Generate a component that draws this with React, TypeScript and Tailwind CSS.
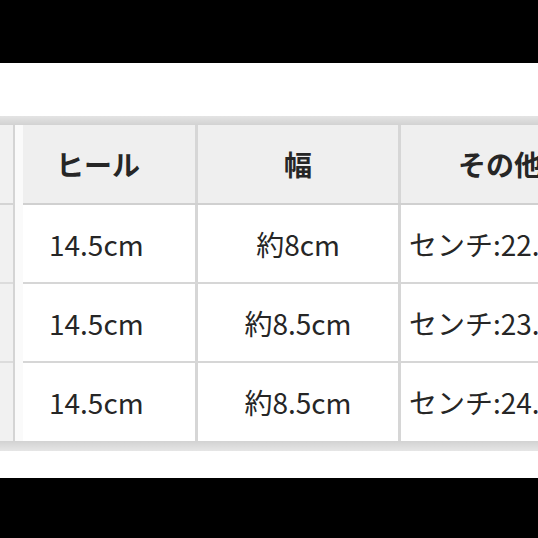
import React from 'react'

const rows = [
  { heel: '14.5cm', width: '約8cm', other: 'センチ:22.5cm' },
  { heel: '14.5cm', width: '約8.5cm', other: 'センチ:23.5cm' },
  { heel: '14.5cm', width: '約8.5cm', other: 'センチ:24.5cm' },
]

export default function App() {
  return (
    <div
      className="flex h-[538px] w-[538px] flex-col overflow-hidden bg-black text-[#262626]"
      style={{ fontFamily: '"Noto Sans CJK JP", "Noto Sans", sans-serif' }}
    >
      <div className="h-[63px] shrink-0 bg-black" />
      <div className="flex h-[415px] shrink-0 flex-col bg-white">
        <div className="h-[53px]" />
        <div className="h-[9px] bg-gradient-to-b from-[#e4e4e4] to-[#d2d2d2]" />

        <div className="flex">
          {/* cut-off first column */}
          <div className="flex w-[15px] shrink-0 flex-col border-r-2 border-[#d4d4d4] bg-[#f1f1f1]">
            <div className="h-[80px] border-b-2 border-[#d4d4d4]" />
            <div className="h-[79px] border-b-2 border-[#dcdcdc]" />
            <div className="h-[79px] border-b-2 border-[#dcdcdc]" />
            <div className="h-[78px]" />
          </div>
          <div className="w-[8px] shrink-0 bg-[#fafafa]" />

          <div className="flex min-w-0 flex-1 flex-col">
            <div className="flex h-[80px] border-b-2 border-[#d0d0d0] bg-[#efefef] text-[28px] font-bold">
              <div className="flex w-[175px] shrink-0 items-center border-r-[3px] border-[#d6d6d6] pl-[33px]">ヒール</div>
              <div className="flex w-[203px] shrink-0 items-center justify-center border-r-[3px] border-[#d6d6d6]">幅</div>
              <div className="flex min-w-[200px] flex-1 items-center whitespace-nowrap pl-[57px]">その他</div>
            </div>
            {rows.map((r, i) => (
              <div
                key={i}
                className={`flex text-[28px] ${i === 2 ? 'h-[78px]' : 'h-[79px] border-b-2 border-[#d6d6d6]'}`}
              >
                <div className="flex w-[175px] shrink-0 items-center border-r-[3px] border-[#d6d6d6] pl-[26px]">{r.heel}</div>
                <div className="flex w-[203px] shrink-0 items-center justify-center border-r-[3px] border-[#d6d6d6]">{r.width}</div>
                <div className="flex min-w-[200px] flex-1 items-center whitespace-nowrap pl-[8px]">{r.other}</div>
              </div>
            ))}
          </div>
        </div>

        <div className="h-[10px] bg-gradient-to-b from-[#d2d2d2] to-[#e6e6e6]" />
        <div className="flex-1 bg-white" />
      </div>
      <div className="flex-1 bg-black" />
    </div>
  )
}
